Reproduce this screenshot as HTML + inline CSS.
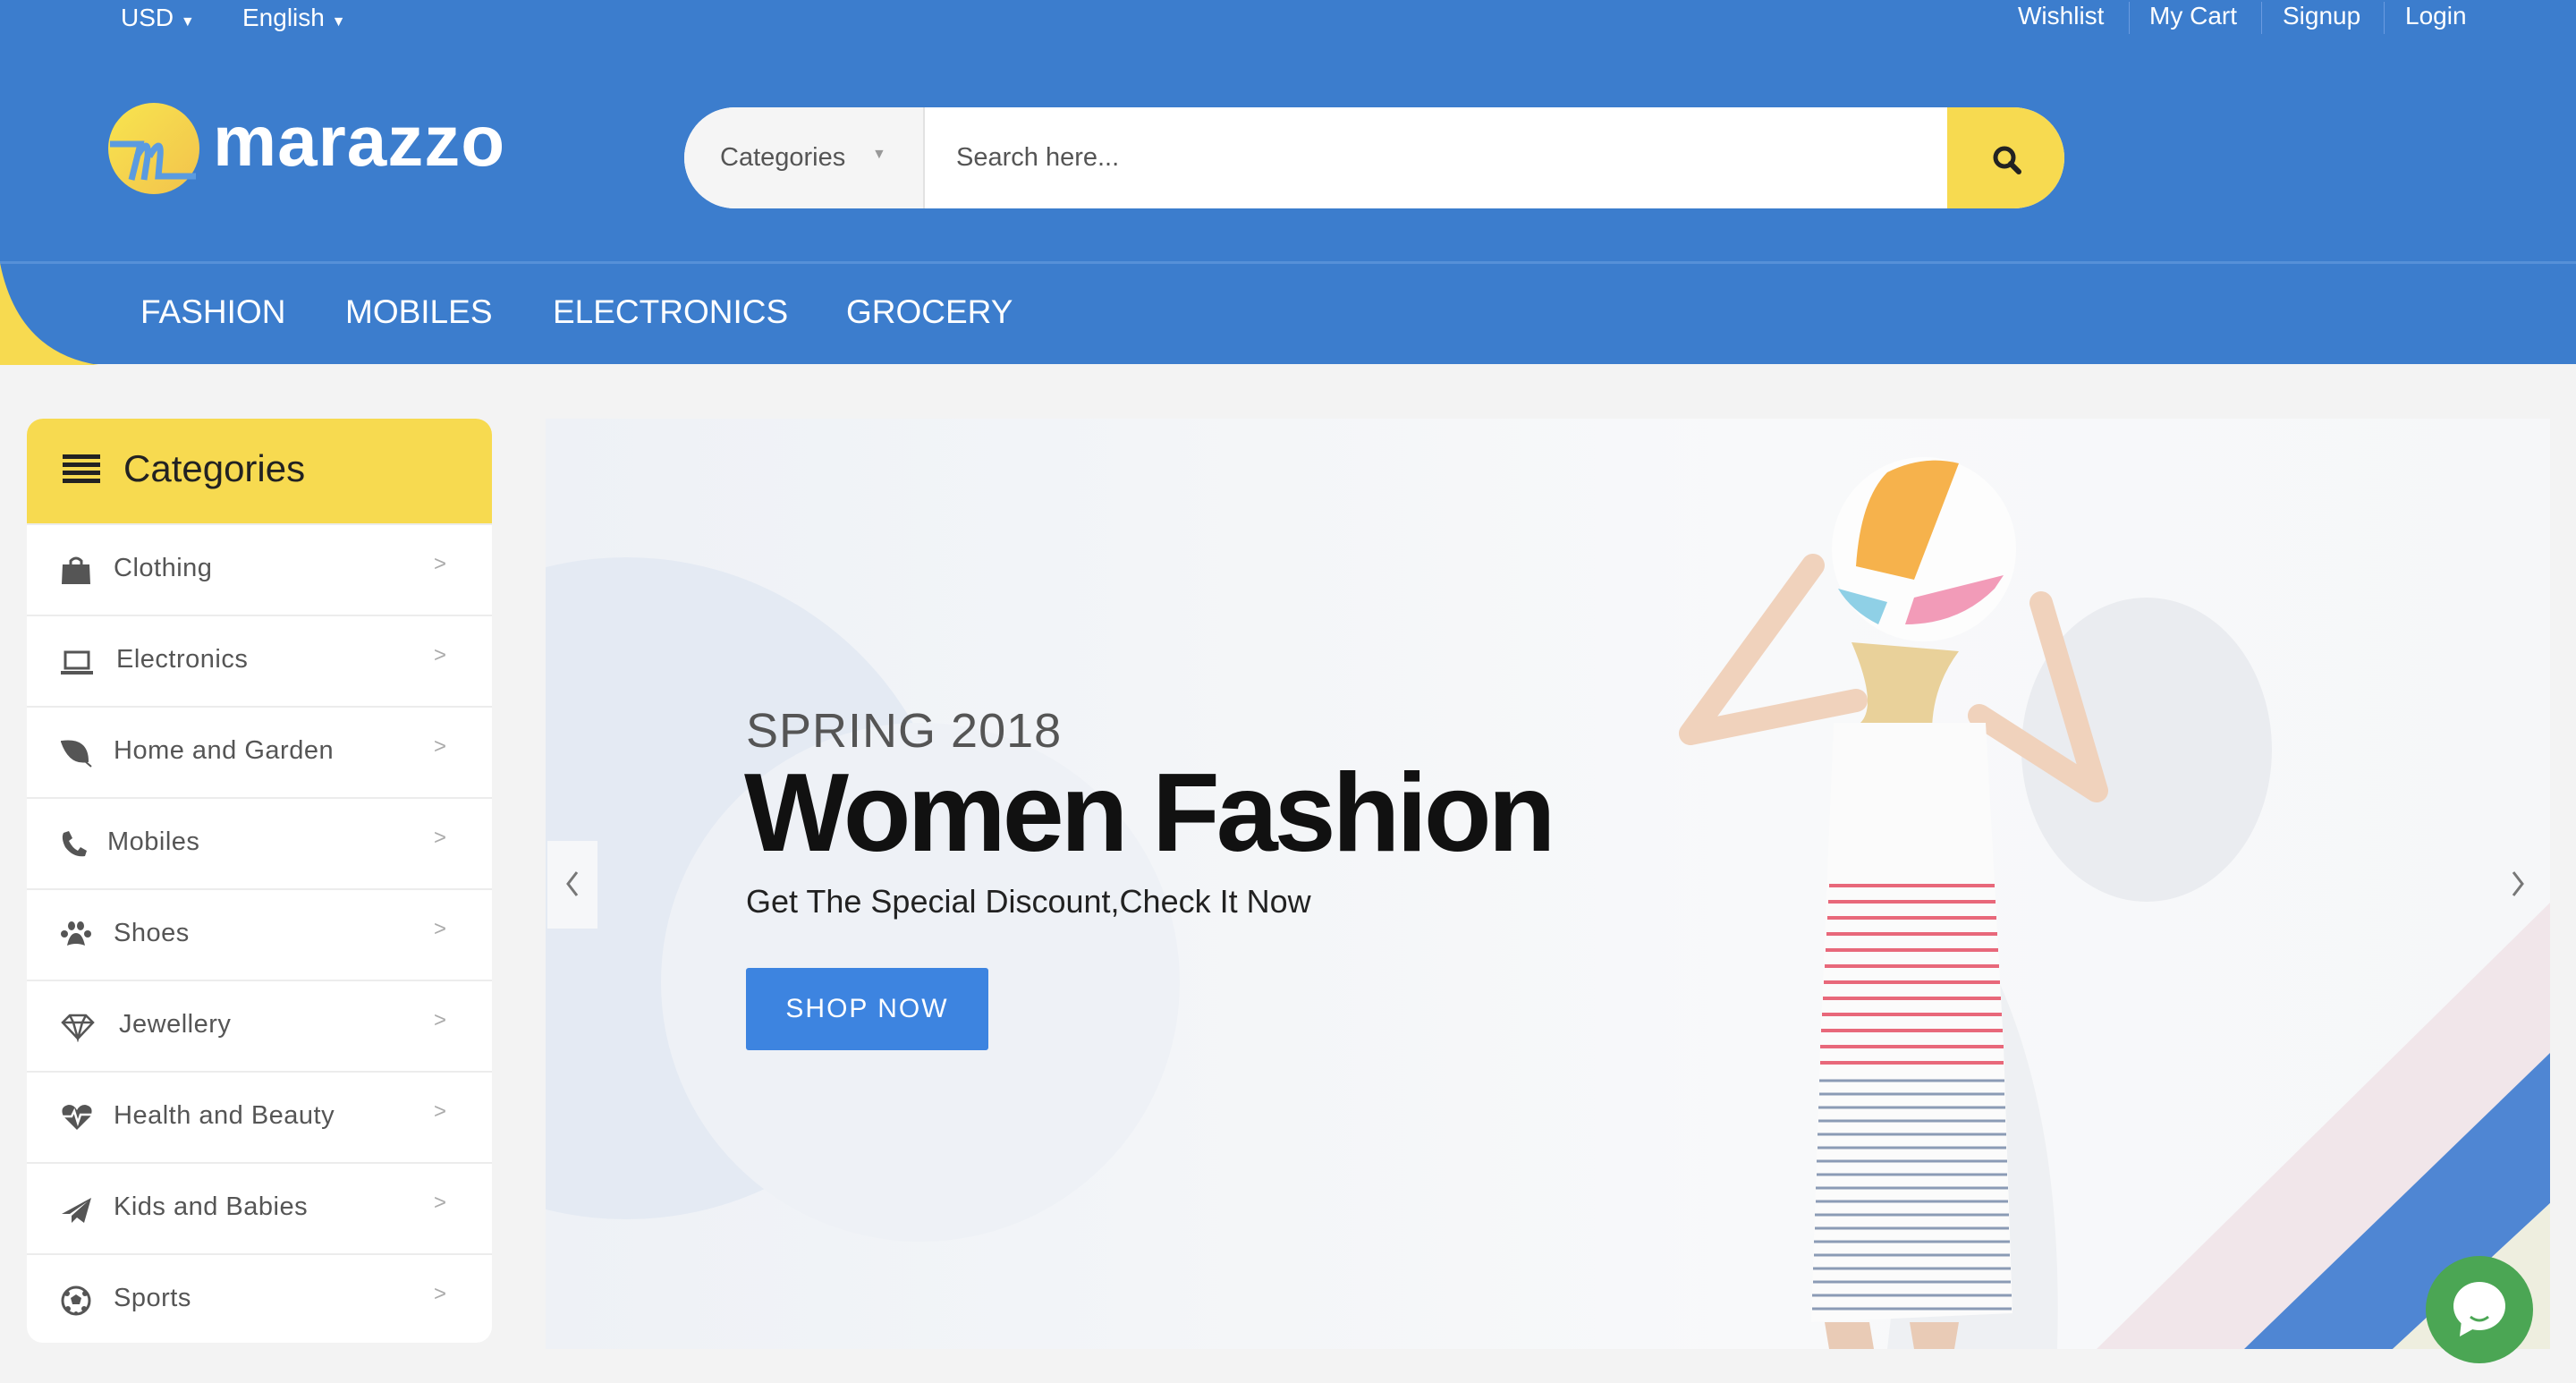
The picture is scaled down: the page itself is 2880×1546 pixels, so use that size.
<!DOCTYPE html>
<html><head><meta charset="utf-8"><style>
*{margin:0;padding:0;box-sizing:border-box}
body{width:2880px;height:1546px;background:#f3f3f3;font-family:"Liberation Sans",sans-serif;position:relative;overflow:hidden}
.hdr{position:absolute;left:0;top:0;width:2880px;height:407px;background:#3c7dcd}
.line{position:absolute;left:0;top:292px;width:2880px;height:3px;background:#5690d8}
.t{position:absolute;color:#fff;font-size:28px}
.nav{position:absolute;top:328px;color:#fff;font-size:37px}
.side{position:absolute;left:30px;top:468px;width:520px;height:1033px;background:#fff;border-radius:18px;overflow:hidden}
.sh{height:117px;background:#f7da50;position:relative}
.row{height:102px;border-top:2px solid #ececec;position:relative;color:#555;font-size:29px}
.row .l{position:absolute;left:97px;top:32px;letter-spacing:.5px}
.row .a{position:absolute;left:455px;top:30px;color:#aaa;font-size:24px}
.row svg{position:absolute;left:38px;top:34px}
</style></head><body>
<div class="hdr"></div>
<div class="line"></div>
<svg style="position:absolute;left:0;top:294px" width="160" height="114"><path d="M0 0 Q20 100 110 114 L0 114Z" fill="#f7da50"/></svg>
<div class="t" style="left:135px;top:4px">USD <span style="font-size:16px">▼</span></div>
<div class="t" style="left:271px;top:4px">English <span style="font-size:16px">▼</span></div>
<div class="t" style="left:2256px;top:2px">Wishlist</div>
<div style="position:absolute;left:2380px;top:2px;width:1px;height:36px;background:#6b9be0"></div>
<div class="t" style="left:2403px;top:2px">My Cart</div>
<div style="position:absolute;left:2528px;top:2px;width:1px;height:36px;background:#6b9be0"></div>
<div class="t" style="left:2552px;top:2px">Signup</div>
<div style="position:absolute;left:2665px;top:2px;width:1px;height:36px;background:#6b9be0"></div>
<div class="t" style="left:2689px;top:2px">Login</div>
<svg style="position:absolute;left:119px;top:113px" width="106" height="106"><defs><linearGradient id="g" x1="0" y1="0" x2="1" y2="1"><stop offset="0" stop-color="#f8e54f"/><stop offset="1" stop-color="#f2c24c"/></linearGradient></defs><circle cx="53" cy="53" r="51" fill="url(#g)"/><path d="M4 48 L38 48 L28 88 M34 62 Q48 38 46 62 L42 88 M48 62 Q62 38 60 62 L58 84 L100 84" stroke="#5b9be0" stroke-width="7" fill="none"/></svg>
<div style="position:absolute;left:238px;top:112px;color:#fff;font-size:80px;font-weight:bold;letter-spacing:1px">marazzo</div>
<div style="position:absolute;left:765px;top:120px;width:1543px;height:113px;background:#fff;border-radius:57px;overflow:hidden">
<div style="position:absolute;left:0;top:0;width:269px;height:113px;background:#f5f5f5;border-right:2px solid #e2e2e2"></div>
<div style="position:absolute;left:40px;top:40px;color:#555;font-size:29px">Categories</div>
<div style="position:absolute;left:210px;top:44px;color:#999;font-size:16px">▼</div>
<div style="position:absolute;left:304px;top:40px;color:#555;font-size:29px">Search here...</div>
<div style="position:absolute;left:1412px;top:0;width:131px;height:113px;background:#f7da50"></div>
<svg style="position:absolute;left:1462px;top:42px" width="34" height="34"><circle cx="14" cy="14" r="10" stroke="#222" stroke-width="5" fill="none"/><path d="M21 21 L30 30" stroke="#222" stroke-width="6" stroke-linecap="round"/></svg>
</div>
<div class="nav" style="left:157px">FASHION</div>
<div class="nav" style="left:386px">MOBILES</div>
<div class="nav" style="left:618px">ELECTRONICS</div>
<div class="nav" style="left:946px">GROCERY</div>

<div class="side">
<div class="sh"><svg style="position:absolute;left:40px;top:40px" width="42" height="32"><rect y="0" width="42" height="5" fill="#222"/><rect y="9" width="42" height="5" fill="#222"/><rect y="18" width="42" height="5" fill="#222"/><rect y="27" width="42" height="5" fill="#222"/></svg><div style="position:absolute;left:108px;top:32px;font-size:42px;color:#222">Categories</div></div>
<div class="row"><svg width="34" height="34"><path d="M11 10 V6 Q17 0 23 6 V10" stroke="#555" stroke-width="3" fill="none"/><path d="M2 10 H32 L33 32 H1Z" fill="#555"/></svg><span class="l">Clothing</span><span class="a">&gt;</span></div>
<div class="row"><svg width="36" height="34"><rect x="5" y="6" width="26" height="18" stroke="#555" stroke-width="3" fill="none"/><rect x="0" y="27" width="36" height="4" fill="#555"/></svg><span class="l" style="left:100px">Electronics</span><span class="a">&gt;</span></div>
<div class="row"><svg width="36" height="34"><path d="M1 4 Q30 0 30 26 Q10 30 1 4Z M4 6 L34 32" fill="#555" stroke="#555" stroke-width="2"/></svg><span class="l">Home and Garden</span><span class="a">&gt;</span></div>
<div class="row"><svg width="30" height="34"><path d="M3 4 L9 2 L13 10 L9 13 Q13 21 19 24 L22 20 L29 24 L27 30 Q14 32 5 20 Q0 10 3 4Z" fill="#555"/></svg><span class="l" style="left:90px">Mobiles</span><span class="a">&gt;</span></div>
<div class="row"><svg width="34" height="34"><ellipse cx="12" cy="6" rx="4" ry="5" fill="#555"/><ellipse cx="22" cy="6" rx="4" ry="5" fill="#555"/><ellipse cx="4" cy="15" rx="4" ry="4" fill="#555"/><ellipse cx="30" cy="15" rx="4" ry="4" fill="#555"/><path d="M7 28 Q10 14 17 14 Q24 14 27 28 Q17 24 7 28Z" fill="#555"/></svg><span class="l">Shoes</span><span class="a">&gt;</span></div>
<div class="row"><svg width="38" height="34"><path d="M2 12 L10 4 H28 L36 12 L19 30Z M2 12 H36 M10 4 L14 12 L19 30 L24 12 L28 4" stroke="#555" stroke-width="2.5" fill="none"/></svg><span class="l" style="left:103px">Jewellery</span><span class="a">&gt;</span></div>
<div class="row"><svg width="36" height="34"><path d="M18 30 L3 15 Q-2 4 9 2 Q15 2 18 8 Q21 2 27 2 Q38 4 33 15Z" fill="#555"/><path d="M2 15 H12 L15 9 L19 22 L22 13 L34 13" stroke="#fff" stroke-width="2.5" fill="none"/></svg><span class="l">Health and Beauty</span><span class="a">&gt;</span></div>
<div class="row"><svg width="36" height="34"><path d="M1 22 L34 4 L26 32 L18 26 L12 32 L12 24 L30 8 L10 22Z" fill="#555"/></svg><span class="l">Kids and Babies</span><span class="a">&gt;</span></div>
<div class="row"><svg width="36" height="34"><circle cx="17" cy="17" r="15" stroke="#555" stroke-width="3" fill="none"/><path d="M17 10 L23 14 L21 21 L13 21 L11 14Z" fill="#555"/><circle cx="7" cy="9" r="3" fill="#555"/><circle cx="27" cy="9" r="3" fill="#555"/><circle cx="8" cy="26" r="3" fill="#555"/><circle cx="26" cy="26" r="3" fill="#555"/><circle cx="17" cy="31" r="2" fill="#555"/></svg><span class="l">Sports</span><span class="a">&gt;</span></div>
</div>

<svg style="position:absolute;left:610px;top:468px" width="2241" height="1040">
<defs><linearGradient id="bg" x1="0" y1="0" x2="1" y2="0"><stop offset="0" stop-color="#eef1f6"/><stop offset=".6" stop-color="#f8f9fa"/><stop offset="1" stop-color="#f6f7f9"/></linearGradient></defs>
<rect width="2241" height="1040" fill="url(#bg)"/>
<circle cx="90" cy="525" r="370" fill="#e4eaf3"/>
<circle cx="419" cy="630" r="290" fill="#eef1f6"/>
<ellipse cx="1790" cy="370" rx="140" ry="170" fill="#eaecf0"/>
<path d="M1560 520 Q1700 700 1690 1040 L1500 1040 Z" fill="#eef0f3"/>
<path d="M1734 1040 L2241 541 L2241 709 L1899 1040Z" fill="#f1e6ea"/>
<path d="M1899 1040 L2241 709 L2241 877 L2065 1040Z" fill="#4f86d3"/>
<path d="M2065 1040 L2241 877 L2241 1040Z" fill="#eeeedf"/>
<g transform="translate(290,0)">
<g stroke="#f0d2bc" stroke-width="26" stroke-linecap="round" stroke-linejoin="round" fill="none">
<path d="M1175 315 L990 352 L1127 164"/>
<path d="M1313 332 L1444 416 L1382 206"/>
</g>
<path d="M1170 250 Q1200 320 1180 340 L1260 350 Q1260 300 1290 260Z" fill="#e9d19a"/>
<path d="M1150 340 L1320 340 L1340 700 L1350 1000 L1125 1010 L1135 700Z" fill="#fbfbfb"/>
<g stroke="#e8687a" stroke-width="4">
<path d="M1145 522 H1330 M1144 540 H1331 M1143 558 H1332 M1142 576 H1333 M1141 594 H1334 M1140 612 H1335 M1139 630 H1336 M1138 648 H1337 M1137 666 H1338 M1136 684 H1339 M1135 702 H1340 M1135 720 H1340"/></g>
<g stroke="#8b9bb5" stroke-width="3"><path d="M1134 740 H1341 M1134 755 H1341 M1133 770 H1342 M1133 785 H1342 M1132 800 H1343 M1132 815 H1343 M1131 830 H1344 M1131 845 H1344 M1130 860 H1345 M1130 875 H1345 M1129 890 H1346 M1129 905 H1346 M1128 920 H1347 M1128 935 H1347 M1127 950 H1348 M1127 965 H1348 M1126 980 H1349 M1126 995 H1349"/></g>
<path d="M1140 1010 H1190 L1195 1040 H1145Z M1235 1010 H1290 L1285 1040 H1240Z" fill="#e9cbb6"/>
</g>
<g transform="translate(200,0)">
<circle cx="1341" cy="146" r="103" fill="#fdfdfd"/>
<path d="M1300 60 Q1340 40 1380 50 L1330 180 L1265 165 Q1270 90 1300 60Z" fill="#f6b24c"/>
<path d="M1245 190 Q1260 215 1290 230 L1300 205Z" fill="#8fd0e6"/>
<path d="M1320 230 Q1380 230 1420 190 L1430 175 L1330 200Z" fill="#f29bb8"/>
</g>
<rect x="2" y="472" width="56" height="98" fill="#f6f7f9"/>
<path d="M35 507 L25 520 L35 533" stroke="#777" stroke-width="3" fill="none"/>
<path d="M2200 507 L2210 520 L2200 533" stroke="#777" stroke-width="3" fill="none"/>
</svg>
<div style="position:absolute;left:834px;top:786px;font-size:54px;color:#555;letter-spacing:1px">SPRING 2018</div>
<div style="position:absolute;left:832px;top:838px;font-size:124px;font-weight:bold;color:#111;letter-spacing:-4px">Women Fashion</div>
<div style="position:absolute;left:834px;top:987px;font-size:36px;color:#222">Get The Special Discount,Check It Now</div>
<div style="position:absolute;left:834px;top:1082px;width:271px;height:92px;background:#3d84e0;border-radius:3px;color:#fff;font-size:30px;letter-spacing:2px;text-align:center;line-height:92px">SHOP NOW</div>
<svg style="position:absolute;left:2712px;top:1404px" width="120" height="120"><circle cx="60" cy="60" r="60" fill="#4ba654"/><ellipse cx="60" cy="56" rx="29" ry="27" fill="#fff"/><path d="M40 72 L38 90 L56 80Z" fill="#fff"/><path d="M50 68 Q60 76 70 68" stroke="#4ba654" stroke-width="3" fill="none"/></svg>
</body></html>
